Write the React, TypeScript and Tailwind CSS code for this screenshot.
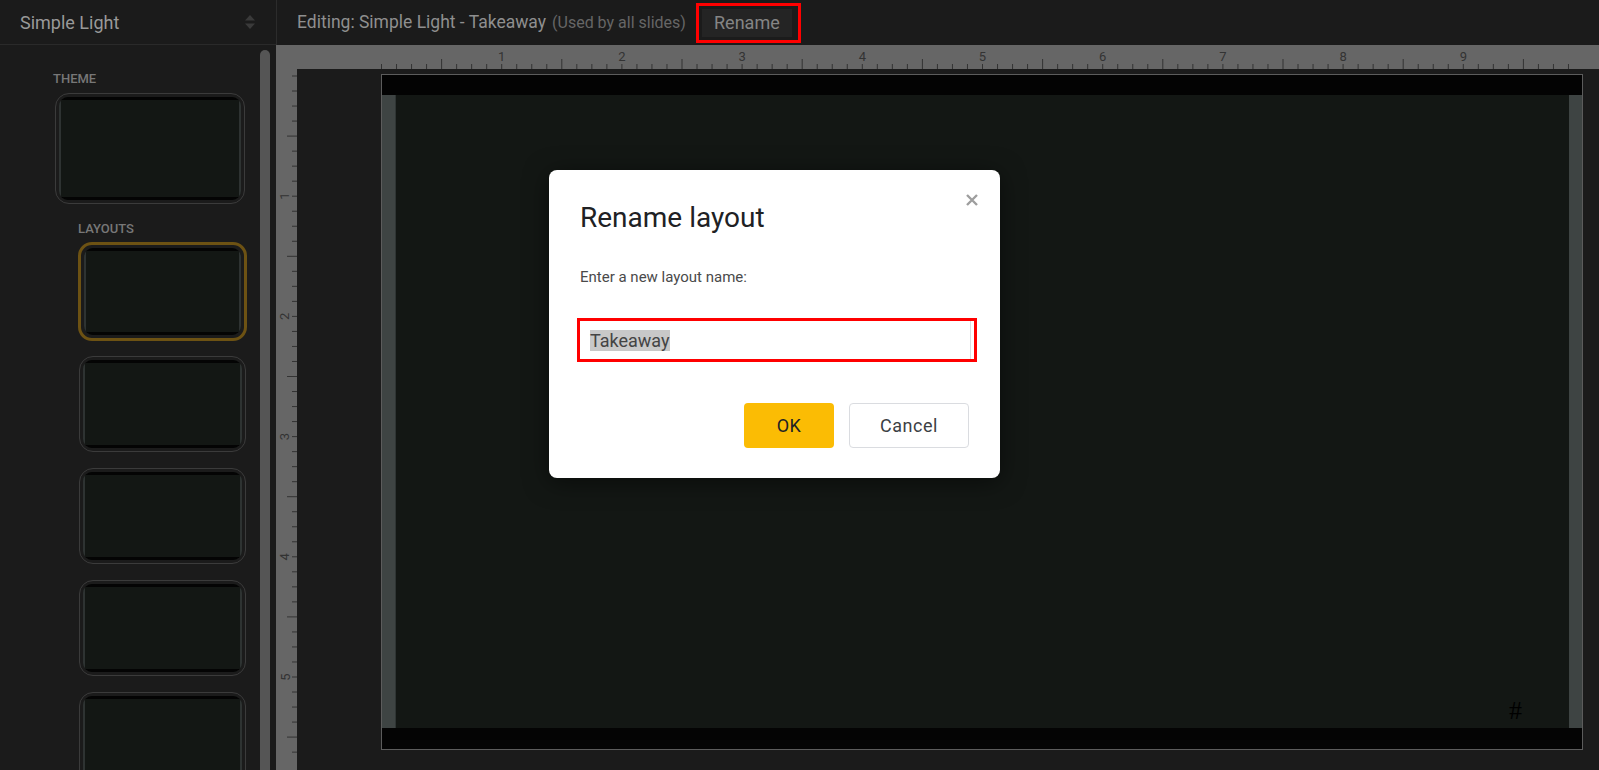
import clsx from "clsx";

const PX_PER_INCH = 120.2;

function Thumb({ selected, className }: { selected?: boolean; className?: string }) {
  return (
    <div
      className={clsx(
        "rounded-[14px] p-[3px]",
        selected ? "border-[3px] border-[#6d5213]" : "border border-[#3b3b3b]",
        className
      )}
    >
      <div className="flex h-full flex-col overflow-hidden rounded-[9px] bg-[#131714]">
        <div className="h-[3px] bg-[#040404]" />
        <div className="flex flex-1">
          <div className="w-[2px] bg-[#2e3332]" />
          <div className="flex-1" />
          <div className="w-[2px] bg-[#2e3332]" />
        </div>
        <div className="h-[3px] bg-[#040404]" />
      </div>
    </div>
  );
}

function Sidebar() {
  return (
    <aside className="flex w-[276px] shrink-0 flex-col">
      <div className="flex h-[45px] items-center justify-between border-b border-[#2a2a2a] pl-5 pr-[20px]">
        <span className="text-[18px] text-[#999]">Simple Light</span>
        <svg width="12" height="16" viewBox="0 0 12 16" className="text-[#3a3a3a]">
          <path d="M6 1 L11 6.5 H1 Z" fill="currentColor" />
          <path d="M6 15 L11 9.5 H1 Z" fill="currentColor" />
        </svg>
      </div>
      <div className="flex flex-1 overflow-hidden">
        <div className="flex-1 pt-[26px]">
          <div className="pl-[53px] text-[13px] font-medium leading-4 text-[#777]">THEME</div>
          <Thumb className="ml-[55px] mt-[6px] h-[111px] w-[190px]" />
          <div className="mt-[17px] pl-[78px] text-[13px] font-medium leading-4 text-[#777]">LAYOUTS</div>
          <div className="mt-[5px] flex flex-col gap-[16px] pl-[78px]">
            <Thumb selected className="h-[99px] w-[169px]" />
            <Thumb className="ml-px -mt-[1px] h-[96px] w-[167px]" />
            <Thumb className="ml-px h-[96px] w-[167px]" />
            <Thumb className="ml-px h-[96px] w-[167px]" />
            <Thumb className="ml-px h-[96px] w-[167px]" />
          </div>
        </div>
        <div className="mr-[6px] mt-[5px] w-[10px] rounded-t-full bg-[#555]" />
      </div>
    </aside>
  );
}

function TopBar() {
  return (
    <div className="flex h-[45px] items-center border-l border-[#2c2c2c] pl-[20px]">
      <span className="text-[17.5px] text-[#8f8f8f]">Editing: Simple Light - Takeaway</span>
      <span className="ml-[6px] text-[16px] text-[#666]">(Used by all slides)</span>
      <div className="ml-[10px] flex h-[40px] w-[105px] items-center border-[3px] border-[#ff0000] pl-[3px] pr-[6px]">
        <div className="flex h-[28px] flex-1 items-center justify-center bg-[#242424] text-[18px] text-[#858585]">
          Rename
        </div>
      </div>
    </div>
  );
}

function TopRuler() {
  const ticks = Array.from({ length: 80 }, (_, i) => i);
  const x0 = 84.5;
  return (
    <svg width="1302" height="24" className="block">
      {ticks.map((i) => {
        const x = x0 + (i * PX_PER_INCH) / 8;
        const long = i % 4 === 0 && i % 8 !== 0;
        return (
          <line key={i} x1={x} x2={x} y1={long ? 14 : 19} y2={24} stroke="#333" strokeWidth="1" />
        );
      })}
      {Array.from({ length: 9 }, (_, n) => n + 1).map((n) => (
        <text
          key={n}
          x={x0 + n * PX_PER_INCH}
          y={16}
          textAnchor="middle"
          fontSize="13"
          fill="#333"
          fontFamily="Roboto, sans-serif"
        >
          {n}
        </text>
      ))}
    </svg>
  );
}

function LeftRuler() {
  const ticks = Array.from({ length: 46 }, (_, i) => i);
  const y0 = 7;
  return (
    <svg width="21" height="701" className="block">
      {ticks.map((i) => {
        const y = y0 + (i * PX_PER_INCH) / 8;
        const long = i % 4 === 0 && i % 8 !== 0;
        return (
          <line key={i} x1={long ? 11 : 16} x2={21} y1={y} y2={y} stroke="#333" strokeWidth="1" />
        );
      })}
      {[1, 2, 3, 4, 5].map((n) => {
        const y = y0 + n * PX_PER_INCH;
        return (
          <text
            key={n}
            x={9}
            y={y}
            textAnchor="middle"
            dominantBaseline="central"
            fontSize="13"
            fill="#333"
            fontFamily="Roboto, sans-serif"
            transform={`rotate(-90 9 ${y})`}
          >
            {n}
          </text>
        );
      })}
    </svg>
  );
}

function Slide() {
  return (
    <div className="ml-[84px] mt-[5px] flex h-[676px] w-[1202px] flex-col border border-[#5c5c5c]">
      <div className="h-[20px] bg-[#030303]" />
      <div className="flex flex-1">
        <div className="w-[13px] bg-[#3e4443]" />
        <div className="relative flex-1 border-l border-[#2f3534] bg-[#131714]">
          <span className="absolute -bottom-[2px] right-[47px] font-['Liberation_Serif',serif] text-[26px] text-black">
            #
          </span>
        </div>
        <div className="w-[13px] bg-[#3e4443]" />
      </div>
      <div className="h-[21px] bg-[#040404]" />
    </div>
  );
}

function RenameDialog() {
  return (
    <div className="absolute left-[549px] top-[170px] h-[308px] w-[451px] rounded-[8px] bg-white px-[31px] pt-[30px] shadow-[0_4px_24px_rgba(0,0,0,0.5)]">
      <svg
        width="12"
        height="12"
        viewBox="0 0 12 12"
        className="absolute right-[22px] top-[24px]"
        stroke="#9e9e9e"
        strokeWidth="2.4"
      >
        <path d="M1 1 L11 11 M11 1 L1 11" />
      </svg>
      <h2 className="text-[28px] leading-[36px] text-[#202124]">Rename layout</h2>
      <p className="mt-[31px] text-[15px] leading-5 text-[#4a4a4a]">Enter a new layout name:</p>
      <div className="-ml-[3px] mt-[31px] h-[44px] w-[400px] border-[3px] border-[#ff0000] pr-[3px]">
        <div className="flex h-full items-center border-r border-[#dadce0] bg-white pl-[10px]">
          <span className="bg-[#c8c8c8] text-[18px] leading-[21px] text-[#444]">Takeaway</span>
        </div>
      </div>
      <div className="mt-[41px] flex justify-end gap-[15px]">
        <button className="h-[45px] w-[90px] rounded-[4px] bg-[#fbbc04] text-[18px] tracking-[0.5px] text-[#202124]">
          OK
        </button>
        <button className="h-[45px] w-[120px] rounded-[4px] border border-[#dadce0] bg-white text-[18px] tracking-[0.5px] text-[#3c4043]">
          Cancel
        </button>
      </div>
    </div>
  );
}

export default function App() {
  return (
    <div className="relative flex h-[770px] w-full overflow-hidden bg-[#1b1b1b] font-['Roboto',sans-serif]">
      <Sidebar />
      <main className="flex min-w-0 flex-1 flex-col">
        <TopBar />
        <div className="grid flex-1 grid-cols-[21px_1fr] grid-rows-[24px_1fr]">
          <div className="bg-[#666]" />
          <div className="overflow-hidden bg-[#666]">
            <TopRuler />
          </div>
          <div className="overflow-hidden bg-[#666]">
            <LeftRuler />
          </div>
          <div className="overflow-hidden bg-[#1b1b1b]">
            <Slide />
          </div>
        </div>
      </main>
      <RenameDialog />
    </div>
  );
}
